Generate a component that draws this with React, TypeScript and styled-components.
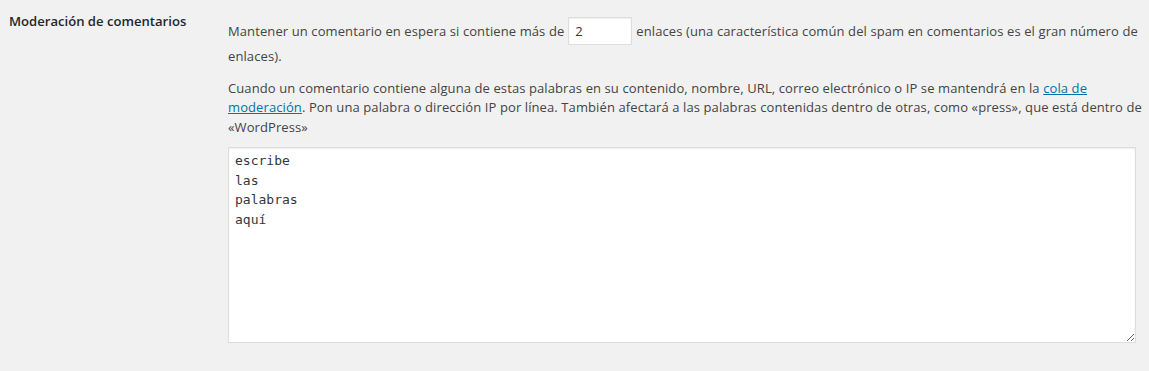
import React from "react";
import styled, { createGlobalStyle } from "styled-components";

const GlobalStyle = createGlobalStyle`
  html, body {
    margin: 0;
    padding: 0;
    background: #f1f1f1;
  }
  body {
    color: #444;
    font-family: "Open Sans", "Noto Sans", sans-serif;
    font-size: 13px;
    line-height: 1.4em;
  }
`;

const FormRow = styled.div`
  display: grid;
  grid-template-columns: 210px 1fr;
  align-items: start;
  padding-left: 8px;
`;

const Label = styled.div`
  padding: 13px 10px 20px 1px;
  color: #23282d;
  font-size: 13.1px;
  font-weight: 600;
  line-height: 1.3;
`;

const Field = styled.div`
  padding: 17px 0 15px 10px;
  min-width: 0;
`;

const Description = styled.p<{ $gap?: number }>`
  margin: ${({ $gap }) => $gap ?? 0}px 0 0;
  font-size: 13px;
  line-height: 1.5;
  letter-spacing: 0.1px;
`;

const SmallInput = styled.input`
  box-sizing: border-box;
  width: 64px;
  height: 28px;
  margin: 0 4px 2px;
  padding: 3px 6px;
  border: 1px solid #ddd;
  box-shadow: inset 0 1px 2px rgba(0, 0, 0, 0.07);
  background: #fff;
  color: #32373c;
  font-family: inherit;
  font-size: 13px;
  outline: none;
`;

const TextLink = styled.a`
  color: #0073aa;
  text-decoration: underline;
`;

const CodeArea = styled.textarea`
  display: block;
  box-sizing: border-box;
  width: calc(100% - 13px);
  height: 196px;
  margin: 10px 0 0;
  padding: 3px 6px;
  border: 1px solid #ddd;
  box-shadow: inset 0 1px 2px rgba(0, 0, 0, 0.07);
  background: #fff;
  color: #32373c;
  font-family: "DejaVu Sans Mono", "Liberation Mono", monospace;
  font-size: 13px;
  line-height: 1.5;
  outline: none;
`;

const App = () => {
  return (
    <>
      <GlobalStyle />
      <FormRow>
        <Label>Moderación de comentarios</Label>
        <Field>
          <Description>
            Mantener un comentario en espera si contiene más de
            <SmallInput type="text" defaultValue="2" />
            enlaces (una característica común del spam en comentarios es el gran número de enlaces).
          </Description>
          <Description $gap={12}>
            Cuando un comentario contiene alguna de estas palabras en su contenido, nombre, URL, correo
            electrónico o IP se mantendrá en la <TextLink href="#">cola de moderación</TextLink>. Pon una
            palabra o dirección IP por línea. También afectará a las palabras contenidas dentro de otras,
            como «press», que está dentro de «WordPress»
          </Description>
          <CodeArea defaultValue={"escribe\nlas\npalabras\naquí"} spellCheck={false} />
        </Field>
      </FormRow>
    </>
  );
};

export default App;
